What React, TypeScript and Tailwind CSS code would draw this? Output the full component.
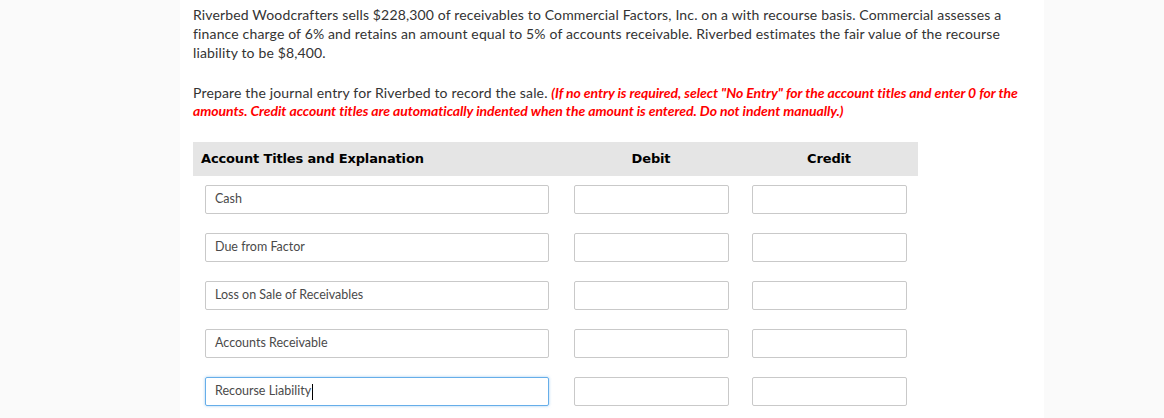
import React from "react";

const rows = [
  "Cash",
  "Due from Factor",
  "Loss on Sale of Receivables",
  "Accounts Receivable",
  "Recourse Liability",
];

export default function App() {
  return (
    <div className="min-h-[418px] bg-[#fafafa] font-['Lato',sans-serif]">
      <div className="ml-[180px] w-[864px] min-h-[418px] bg-white pl-[13px] pr-4 pt-[5px]">
        <p className="text-[14px] leading-[19px] tracking-[0.15px] text-[#333]">
          Riverbed Woodcrafters sells $228,300 of receivables to Commercial Factors, Inc. on a with recourse basis.
          Commercial assesses a<br />
          finance charge of 6% and retains an amount equal to 5% of accounts receivable. Riverbed estimates the fair
          value of the recourse
          <br />
          liability to be $8,400.
        </p>
        <p className="mt-[22px] text-[14px] leading-[18px] tracking-[0.15px] text-[#333]">
          Prepare the journal entry for Riverbed to record the sale.{" "}
          <span className="font-bold italic text-[#ff0000] tracking-[-0.06px]">
            (If no entry is required, select "No Entry" for the account titles and enter 0 for the
            <br />
            amounts. Credit account titles are automatically indented when the amount is entered. Do not indent
            manually.)
          </span>
        </p>

        <div className="mt-[22px] w-[725px]">
          <div className="flex h-[34px] items-center bg-[#e5e5e5] font-['DejaVu_Sans',sans-serif] text-[13px] font-bold tracking-[-0.15px] text-black">
            <div className="w-[369px] pl-2">Account Titles and Explanation</div>
            <div className="w-[178px] text-center">Debit</div>
            <div className="w-[178px] text-center">Credit</div>
          </div>
          <div className="flex flex-col gap-[19px] pt-[9px]">
            {rows.map((r, i) => (
              <div key={r} className="flex">
                <div className="w-[369px] pl-3">
                  <div
                    className={
                      "flex h-[29px] w-[344px] items-center rounded-[2px] border px-[9px] text-[12.5px] text-[#4a4a4a] " +
                      (i === 4
                        ? "border-[#66aee9] shadow-[0_0_3px_rgba(102,174,233,0.6)]"
                        : "border-[#c9c9c9]")
                    }
                  >
                    {r}
                    {i === 4 && <span className="ml-[1px] h-[16px] w-px bg-black" />}
                  </div>
                </div>
                <div className="w-[178px] pl-3">
                  <div className="h-[29px] w-[155px] rounded-[2px] border border-[#c9c9c9]" />
                </div>
                <div className="w-[178px] pl-3">
                  <div className="h-[29px] w-[155px] rounded-[2px] border border-[#c9c9c9]" />
                </div>
              </div>
            ))}
          </div>
        </div>
      </div>
    </div>
  );
}
